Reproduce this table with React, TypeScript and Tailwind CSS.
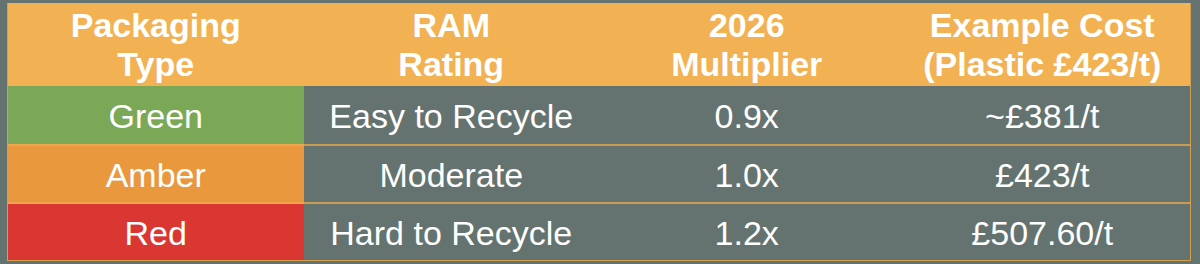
const headers = [
  ["Packaging", "Type"],
  ["RAM", "Rating"],
  ["2026", "Multiplier"],
  ["Example Cost", "(Plastic £423/t)"],
];

const rows = [
  { type: "Green", bg: "bg-[#7ba856]", rating: "Easy to Recycle", mult: "0.9x", cost: "~£381/t" },
  { type: "Amber", bg: "bg-[#e9983d]", rating: "Moderate", mult: "1.0x", cost: "£423/t" },
  { type: "Red", bg: "bg-[#da3733]", rating: "Hard to Recycle", mult: "1.2x", cost: "£507.60/t" },
];

export default function App() {
  return (
    <div
      className="h-[264px] w-[1200px] bg-[#647370] pt-[3px] pl-[7px]"
      style={{ fontFamily: '"Liberation Sans", Arial, sans-serif' }}
    >
      <div className="w-[1184px] border-x border-b border-[#d4a04f]">
        <div className="grid h-[83px] grid-cols-4 bg-[#f2b152] text-[34px] font-bold leading-[39px] text-white">
          {headers.map((h) => (
            <div key={h[0]} className="flex flex-col items-center justify-center text-center">
              <span>{h[0]}</span>
              <span>{h[1]}</span>
            </div>
          ))}
        </div>
        {rows.map((r, i) => (
          <div key={r.type} className="grid h-[58px] grid-cols-4 text-[34px] text-white">
            <div
              className={`flex items-center justify-center pt-0.5 ${r.bg} ${
                i > 0 ? "border-t-2 border-[#eea54c]" : ""
              }`}
            >
              {r.type}
            </div>
            {[r.rating, r.mult, r.cost].map((v, j) => (
              <div
                key={j}
                className={`flex items-center justify-center pt-0.5 ${
                  i > 0 ? "border-t-2 border-[#c99a52]" : ""
                }`}
              >
                {v}
              </div>
            ))}
          </div>
        ))}
      </div>
    </div>
  );
}
